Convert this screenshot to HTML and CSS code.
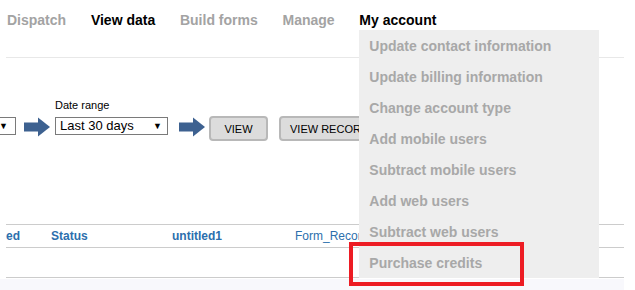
FILE: index.html
```html
<!DOCTYPE html>
<html lang="en">
<head>
  <meta charset="UTF-8">
  <meta name="viewport" content="width=device-width, initial-scale=1.0">
  <link rel="stylesheet" href="styles.css">
</head>
<body>
  <div class="page">
    <ul class="nav">
      <li class="nav-item">Dispatch</li>
      <li class="nav-item active">View data</li>
      <li class="nav-item">Build forms</li>
      <li class="nav-item">Manage</li>
      <li class="nav-item active account">
        My account
        <ul class="menu">
          <li>Update contact information</li>
          <li>Update billing information</li>
          <li>Change account type</li>
          <li>Add mobile users</li>
          <li>Subtract mobile users</li>
          <li>Add web users</li>
          <li>Subtract web users</li>
          <li>Purchase credits</li>
        </ul>
      </li>
    </ul>

    <div class="filters">
      <div class="field first">
        <label>&nbsp;</label>
        <div class="select"><span class="caret">&#9660;</span></div>
      </div>
      <svg class="arrow" width="26" height="20" viewBox="0 0 26 20">
        <rect x="0" y="5.5" width="15" height="9" fill="#3d6190"/>
        <polygon points="14,0.5 26,10 14,19.5" fill="#3d6190"/>
      </svg>
      <div class="field">
        <label>Date range</label>
        <div class="select range">Last 30 days<span class="caret">&#9660;</span></div>
      </div>
      <svg class="arrow second" width="26" height="20" viewBox="0 0 26 20">
        <rect x="0" y="5.5" width="15" height="9" fill="#3d6190"/>
        <polygon points="14,0.5 26,10 14,19.5" fill="#3d6190"/>
      </svg>
      <button class="btn view">VIEW</button>
      <button class="btn records">VIEW RECORDS</button>
    </div>

    <div class="table">
      <div class="row head">
        <div class="cell c1">ed</div>
        <div class="cell c2">Status</div>
        <div class="cell c3">untitled1</div>
        <div class="cell c4 plain">Form_Record</div>
      </div>
      <div class="row empty"></div>
    </div>
  </div>

  <div class="highlight"></div>
</body>
</html>
```

FILE: styles.css
```css
* {
  box-sizing: border-box;
}

html,
body {
  height: 100%;
}

body {
  margin: 0;
  font-family: "Liberation Sans", Arial, sans-serif;
  background: #fff;
  overflow: hidden;
  position: relative;
}

.page {
  width: 624px;
  padding-left: 6px;
  min-height: 100%;
  background: linear-gradient(#fff 279px, #f8f8fc 279px);
}

.nav {
  list-style: none;
  margin: 0;
  padding: 0 0 0 1px;
  height: 58px;
  display: flex;
  gap: 24.75px;
  border-bottom: 1px solid #e8e8e8;
}

.nav-item {
  font-size: 14px;
  font-weight: bold;
  color: #a3a3a3;
  padding-top: 11px;
  line-height: 19px;
  height: 30px;
}

.nav-item.active {
  color: #000;
}

.account {
  position: relative;
}

.menu {
  position: absolute;
  top: 100%;
  left: 0;
  z-index: 10;
  width: 240px;
  margin: 0;
  padding: 1px 0 0;
  list-style: none;
  background: #eeeeee;
}

.menu li {
  height: 31px;
  line-height: 31px;
  padding-left: 10px;
  font-size: 14px;
  font-weight: bold;
  color: #a8a8a8;
  white-space: nowrap;
}

.menu li:last-child {
  height: 30px;
}

.filters {
  display: flex;
  align-items: flex-start;
  margin-top: 41px;
  height: 42px;
}

.field label {
  display: block;
  font-size: 11px;
  line-height: 13px;
  height: 13px;
  margin-bottom: 5px;
  color: #000;
}

.select {
  position: relative;
  height: 18px;
  border: 1px solid #7a7a7a;
  background: #fff;
  font-size: 13px;
  line-height: 16px;
  padding-left: 4px;
  color: #000;
}

.first {
  margin-left: -56px;
}

.first .select {
  width: 66px;
}

.range {
  width: 113px;
}

.caret {
  position: absolute;
  right: 5px;
  top: 0;
  font-size: 9px;
  line-height: 16px;
}

.first .caret {
  right: 7px;
}

.arrow {
  margin: 18px 5px 0 8px;
}

.arrow.second {
  margin: 18px 4px 0 11px;
}

.btn {
  margin-top: 17px;
  height: 25px;
  padding: 0 13px;
  border: 2px solid #b8b8b8;
  border-radius: 4px;
  background: #dcdcdc;
  font-family: "Liberation Sans", Arial, sans-serif;
  font-size: 11px;
  color: #000;
  white-space: nowrap;
}

.view {
  width: 59px;
  padding: 0;
}

.records {
  margin-left: 11px;
  padding: 0 9px;
}

.table {
  margin-top: 83px;
  border-top: 1px solid #cccccc;
}

.row {
  display: flex;
  border-bottom: 1px solid #cccccc;
}

.head {
  height: 23px;
}

.empty {
  height: 30px;
}

.cell {
  font-size: 12px;
  font-weight: bold;
  line-height: 23px;
  color: #2c6fad;
  white-space: nowrap;
}

.cell.plain {
  font-weight: normal;
}

.c1 {
  width: 45px;
}

.c2 {
  width: 121px;
}

.c3 {
  width: 123px;
}

.highlight {
  position: absolute;
  left: 349px;
  top: 242px;
  width: 175px;
  height: 44px;
  border: 4px solid #ed1c24;
  z-index: 20;
}
```
